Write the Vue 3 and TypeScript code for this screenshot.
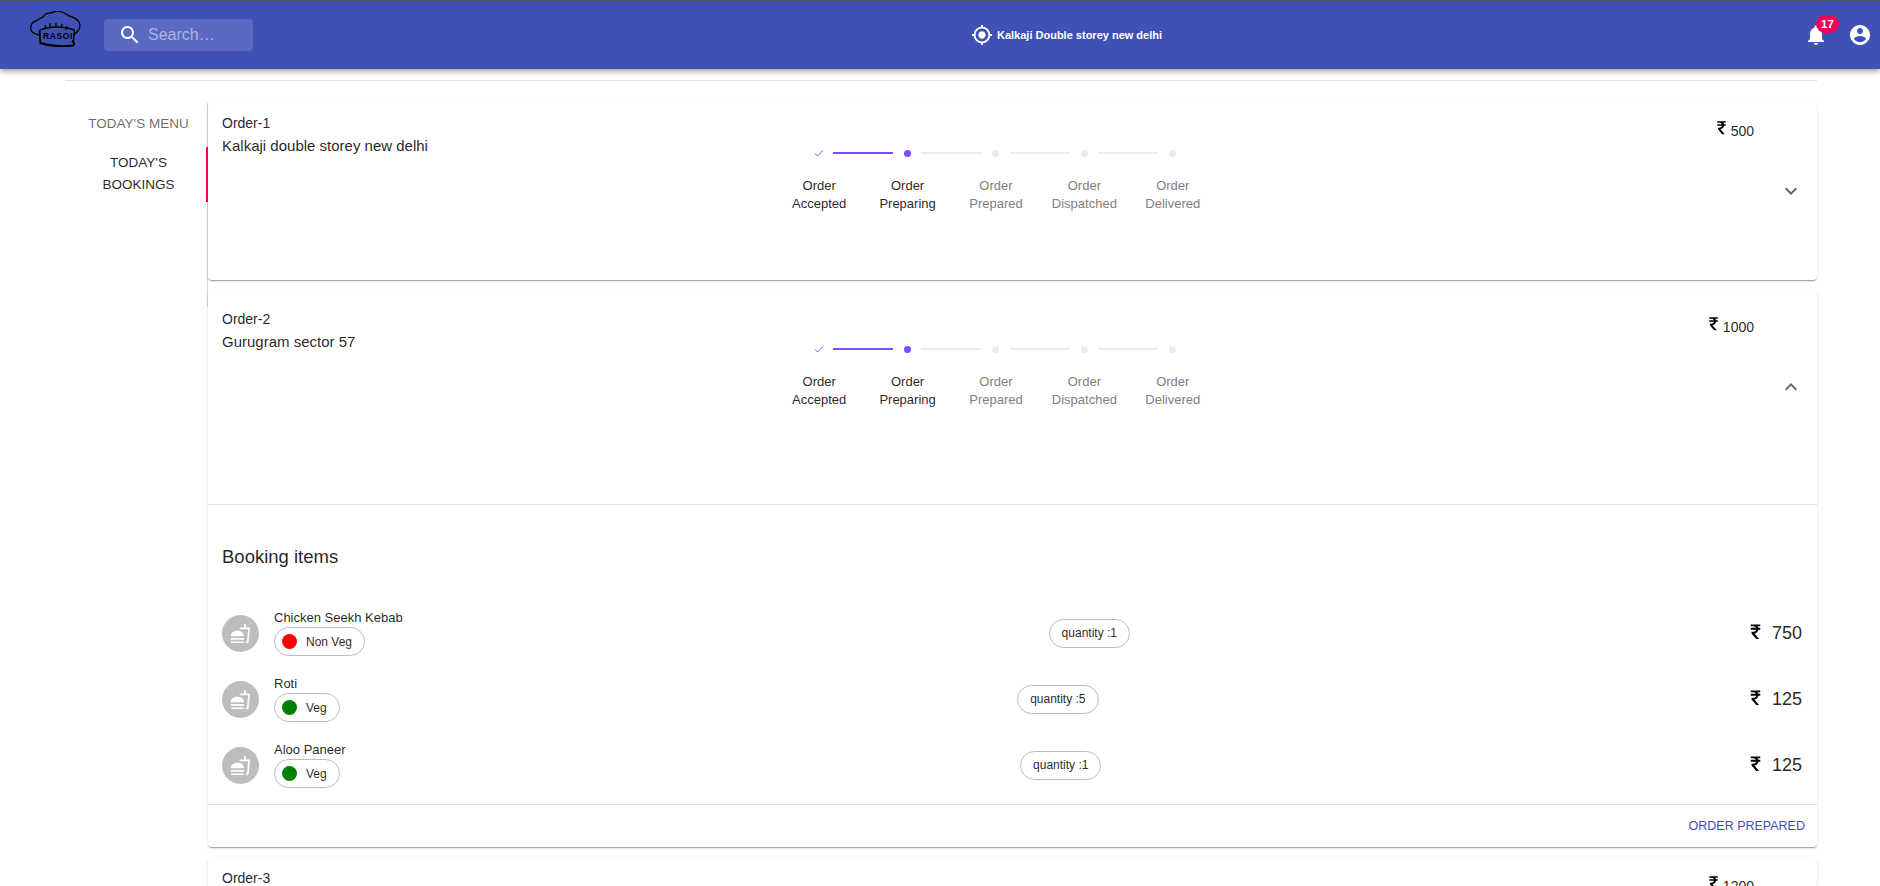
<script setup lang="ts">
interface Step { label: string; state: 'done' | 'active' | 'idle' }
interface Item { name: string; veg: boolean; qty: number; price: number }

const steps: Step[] = [
  { label: 'Accepted', state: 'done' },
  { label: 'Preparing', state: 'active' },
  { label: 'Prepared', state: 'idle' },
  { label: 'Dispatched', state: 'idle' },
  { label: 'Delivered', state: 'idle' },
]
const items: Item[] = [
  { name: 'Chicken Seekh Kebab', veg: false, qty: 1, price: 750 },
  { name: 'Roti', veg: true, qty: 5, price: 125 },
  { name: 'Aloo Paneer', veg: true, qty: 1, price: 125 },
]
const rupee = 'M6 3h12v2.300h-3.600c.6.7 1 1.300 1.200 2.100H18v2.300h-2.400c-.4 2.600-2.400 4.500-5 4.900L16.500 21.500h-3.600l-5.900-7V12.300h2.100c1.900 0 3.200-.9 3.600-2.600H6V7.400h6.500C12 6.200 10.900 5.300 9.400 5.300H6z'
</script>

<template>
  <div class="page">
    <header class="bar">
      <div class="logo">
        <svg width="51" height="36" viewBox="0 0 51 36" fill="none" stroke="#000" stroke-width="1.300">
          <path d="M9 24C4 23 .7 21 .7 17 .7 13 3 10.500 7 9.500 9 8 11 6.500 13 6 15 3 18 1.700 21 2 24 .3 29 0 32 1 35 2 37 3.500 39 5 43 6 47 8 49 11 50.500 14 50 18 47 21 45 23 44 24 43 24.500" />
          <path d="M10 19C20 15 34 15 44.500 19L43.500 30" />
          <path d="M9.500 19L10.500 33" stroke-width="1.800" />
          <path d="M10 32C20 35 33 36 43 34.500 45 33 44 31 42 30" stroke-width="2" />
          <path d="M15 14l.6 4M20 12l.4 5M26 12l0 5M32 13l-.8 4M37 15l-1.200 4" />
          <text x="13" y="28" class="logo-text">RASOI</text>
        </svg>
      </div>
      <div class="search">
        <svg class="search-icon" viewBox="0 0 24 24" width="24" height="24"><path fill="#fff" d="M15.500 14h-.79l-.28-.27C15.410 12.590 16 11.110 16 9.500 16 5.910 13.090 3 9.500 3S3 5.910 3 9.500 5.910 16 9.500 16c1.610 0 3.090-.59 4.230-1.570l.27.28v.79l5 4.990L20.490 19l-4.990-5zm-6 0C7.010 14 5 11.990 5 9.500S7.010 5 9.500 5 14 7.010 14 9.500 11.990 14 9.500 14z"/></svg>
        <span class="search-text">Search…</span>
      </div>
      <div class="location">
        <svg viewBox="0 0 24 24" width="22" height="22"><path fill="#fff" d="M12 8c-2.210 0-4 1.790-4 4s1.790 4 4 4 4-1.790 4-4-1.790-4-4-4zm8.940 3c-.46-4.170-3.770-7.480-7.940-7.940V1h-2v2.060C6.830 3.520 3.520 6.830 3.060 11H1v2h2.060c.46 4.170 3.770 7.480 7.940 7.940V23h2v-2.060c4.170-.46 7.480-3.770 7.940-7.940H23v-2h-2.060zM12 19c-3.870 0-7-3.130-7-7s3.130-7 7-7 7 3.130 7 7-3.130 7-7 7z"/></svg>
        <span>Kalkaji Double storey new delhi</span>
      </div>
      <div class="actions">
        <div class="bell">
          <svg viewBox="0 0 24 24" width="24" height="24"><path fill="#fff" d="M12 22c1.100 0 2-.9 2-2h-4c0 1.100.89 2 2 2zm6-6v-5c0-3.070-1.640-5.640-4.500-6.320V4c0-.83-.67-1.500-1.500-1.500s-1.500.67-1.500 1.500v.68C7.630 5.360 6 7.920 6 11v5l-2 2v1h16v-1l-2-2z"/></svg>
          <span class="badge">17</span>
        </div>
        <svg viewBox="0 0 24 24" width="24" height="24"><path fill="#fff" d="M12 2C6.480 2 2 6.480 2 12s4.480 10 10 10 10-4.480 10-10S17.520 2 12 2zm0 3c1.660 0 3 1.340 3 3s-1.340 3-3 3-3-1.340-3-3 1.340-3 3-3zm0 14.200c-2.500 0-4.710-1.280-6-3.220.03-1.990 4-3.080 6-3.080 1.990 0 5.970 1.090 6 3.080-1.290 1.940-3.500 3.220-6 3.220z"/></svg>
      </div>
    </header>

    <main class="content">
      <hr class="rule" />
      <div class="columns">
        <nav class="tabs">
          <div class="tab">TODAY'S MENU</div>
          <div class="tab tab-selected">TODAY'S<br />BOOKINGS</div>
        </nav>
        <section class="orders">
          <article class="card card-first">
            <div class="summary">
              <div class="who">
                <div class="order-no">Order-1</div>
                <div class="place">Kalkaji double storey new delhi</div>
              </div>
              <div class="stepper">
                <div v-for="(s, i) in steps" :key="s.label" class="step" :class="s.state">
                  <div class="track">
                    <svg v-if="s.state === 'done'" class="check" viewBox="0 0 24 24" width="12" height="12"><path fill="none" stroke="#7c4dff" stroke-width="2" d="M4 13l5 5L20 7"/></svg>
                    <span v-else class="dot"></span>
                    <span v-if="i < steps.length - 1" class="line"></span>
                  </div>
                  <div class="step-label">Order<br />{{ s.label }}</div>
                </div>
              </div>
              <div class="price"><svg viewBox="0 0 24 24" width="17" height="17"><path :d="rupee"/></svg><span>500</span></div>
              <svg class="chevron" viewBox="0 0 24 24" width="24" height="24"><path fill="#666" d="M16.590 8.590L12 13.170 7.410 8.590 6 10l6 6 6-6z"/></svg>
            </div>
          </article>

          <article class="card card-open">
            <div class="summary summary-open">
              <div class="who">
                <div class="order-no">Order-2</div>
                <div class="place">Gurugram sector 57</div>
              </div>
              <div class="stepper">
                <div v-for="(s, i) in steps" :key="s.label" class="step" :class="s.state">
                  <div class="track">
                    <svg v-if="s.state === 'done'" class="check" viewBox="0 0 24 24" width="12" height="12"><path fill="none" stroke="#7c4dff" stroke-width="2" d="M4 13l5 5L20 7"/></svg>
                    <span v-else class="dot"></span>
                    <span v-if="i < steps.length - 1" class="line"></span>
                  </div>
                  <div class="step-label">Order<br />{{ s.label }}</div>
                </div>
              </div>
              <div class="price"><svg viewBox="0 0 24 24" width="17" height="17"><path :d="rupee"/></svg><span>1000</span></div>
              <svg class="chevron" viewBox="0 0 24 24" width="24" height="24"><path fill="#666" d="M12 8l-6 6 1.410 1.410L12 10.830l4.590 4.580L18 14z"/></svg>
            </div>
            <div class="details">
              <h3 class="details-title">Booking items</h3>
              <div v-for="it in items" :key="it.name" class="item">
                <div class="item-main">
                  <div class="avatar">
                    <svg viewBox="0 0 24 24" width="21" height="21"><path fill="#fff" d="M1 21.980c0 .56.450 1.010 1.010 1.010H15c.56 0 1.010-.45 1.010-1.010V21H1v.98zM8.500 8.990C4.750 8.990 1 11 1 15h15c0-4-3.750-6.010-7.500-6.010zM1 17h15v2H1zM18 5V1h-2v4h-5l.23 2h9.560l-1.400 14H18v2h1.720c.84 0 1.530-.65 1.630-1.470L23 5h-5z"/></svg>
                  </div>
                  <div class="item-text">
                    <div class="item-name">{{ it.name }}</div>
                    <div class="chip chip-type">
                      <span class="swatch" :class="it.veg ? 'veg' : 'nonveg'"></span>
                      <span>{{ it.veg ? 'Veg' : 'Non Veg' }}</span>
                    </div>
                  </div>
                </div>
                <div class="chip chip-qty">quantity :{{ it.qty }}</div>
                <div class="item-price"><svg viewBox="0 0 24 24" width="19" height="19"><path :d="rupee"/></svg><span>{{ it.price }}</span></div>
              </div>
            </div>
            <div class="footer"><span class="action">ORDER PREPARED</span></div>
          </article>

          <article class="card">
            <div class="summary">
              <div class="who">
                <div class="order-no">Order-3</div>
              </div>
              <div class="price"><svg viewBox="0 0 24 24" width="17" height="17"><path :d="rupee"/></svg><span>1200</span></div>
            </div>
          </article>
        </section>
      </div>
    </main>
  </div>
</template>

<style>
html, body { margin: 0; height: 100%; overflow: hidden; background: #fff; }
</style>

<style scoped>
.page {
  height: 886px;
  overflow: hidden;
  font-family: "Liberation Sans", Arial, sans-serif;
  color: rgba(0, 0, 0, 0.87);
  position: relative;
}
.bar {
  position: relative;
  z-index: 2;
  height: 68px;
  border-top: 1px solid #555;
  background: #3f51b5;
  display: flex;
  align-items: center;
  padding: 0 8px 0 30px;
  box-shadow: 0 2px 4px -1px rgba(0,0,0,.2), 0 4px 5px rgba(0,0,0,.14), 0 1px 10px rgba(0,0,0,.12);
}
.logo { width: 74px; height: 36px; margin-top: -12px; }
.logo-text { font: 700 8.500px "Liberation Sans", sans-serif; fill: #000; stroke: none; letter-spacing: .6px; }
.search {
  width: 135px;
  height: 32px;
  margin-top: -1px;
  border-radius: 4px;
  background: rgba(255,255,255,.15);
  display: flex;
  align-items: center;
  padding-left: 14px;
}
.search-icon { flex: none; }
.search-text { margin-left: 6px; font-size: 16px; color: rgba(255,255,255,.5); }
.location {
  margin-left: 718px;
  display: flex;
  align-items: center;
  gap: 4px;
  color: #fff;
  font-size: 11px;
  font-weight: 700;
}
.actions { margin-left: auto; display: flex; align-items: center; gap: 20px; }
.bell { position: relative; width: 24px; height: 24px; }
.badge {
  position: absolute;
  top: -8px;
  left: 12px;
  min-width: 23px;
  height: 18px;
  border-radius: 9px;
  background: #f50057;
  color: #fff;
  font-size: 11.500px;
  font-weight: 700;
  display: flex;
  align-items: center;
  justify-content: center;
}
.content { padding: 11px 63px 0 65px; }
.rule { margin: 0; border: 0; height: 1px; background: #e0e0e0; }
.columns { display: flex; margin-top: 22px; align-items: flex-start; }
.tabs {
  width: 143px;
  height: 204px;
  box-sizing: border-box;
  flex: none;
  border-right: 1px solid #d8d8d8;
}
.tab {
  font-size: 13.500px;
  line-height: 22px;
  text-align: center;
  color: rgba(0,0,0,.6);
  height: 44px;
  padding: 0 0 2px 5px;
  display: flex;
  align-items: center;
  justify-content: center;
  box-sizing: border-box;
  white-space: nowrap;
}
.tab-selected {
  position: relative;
  color: rgba(0,0,0,.87);
  height: 55px;
  padding-bottom: 2px;
}
.tab-selected::after {
  content: '';
  position: absolute;
  right: -1px;
  top: 0;
  bottom: 0;
  width: 2px;
  background: #f50057;
}
.orders { flex: 1; min-width: 0; }
.card {
  background: #fff;
  border-radius: 4px;
  box-shadow: 0 2px 1px -1px rgba(0,0,0,.2), 0 1px 1px rgba(0,0,0,.14), 0 1px 3px rgba(0,0,0,.12);
  margin-bottom: 11px;
}
.card-first { height: 177px; }
.summary {
  position: relative;
  display: flex;
  padding: 10px 14px 0;
  height: 100%;
  box-sizing: border-box;
}
.summary-open { height: 214px; padding-top: 18px; border-bottom: 1px solid #e0e0e0; }
.who { width: 553px; flex: none; }
.order-no { font-size: 14px; line-height: 20px; }
.place { font-size: 15px; line-height: 20px; margin-top: 3px; }
.stepper { display: flex; width: 442px; margin-top: 35px; }
.step { width: 88.400px; text-align: center; flex: none; }
.track { position: relative; height: 10px; display: flex; align-items: center; justify-content: center; }
.dot { width: 7px; height: 7px; border-radius: 50%; background: #eaeaf0; }
.active .dot { background: #7c4dff; }
.line { position: absolute; left: 58px; width: 60px; height: 2px; background: #eaeaf0; }
.done .line { background: #7c4dff; }
.step-label { margin-top: 19px; font-size: 13px; line-height: 18px; color: #808080; }
.done .step-label, .active .step-label { color: rgba(0,0,0,.87); }
.price {
  position: absolute;
  right: 63px;
  top: 16px;
  display: flex;
  align-items: flex-end;
  gap: 1px;
  font-size: 14px;
  line-height: 16px;
}
.summary-open .price { top: 24px; }
.price svg { margin-bottom: 3px; }
.chevron { position: absolute; right: 14px; top: 76px; }
.summary-open .chevron { top: 84px; }
.details { padding: 40px 14px 0; }
.details-title { margin: 0 0 31px; font-size: 18.500px; font-weight: 400; line-height: 24px; }
.item { height: 66px; display: flex; align-items: center; justify-content: space-between; }
.item-main { display: flex; align-items: center; padding-right: 30px; }
.avatar {
  width: 37px;
  height: 37px;
  border-radius: 50%;
  background: #bdbdbd;
  display: flex;
  align-items: center;
  justify-content: center;
  margin-right: 15px;
}
.item-name { font-size: 13px; line-height: 15px; margin-bottom: 2px; }
.chip {
  border: 1px solid #bdbdbd;
  border-radius: 15px;
  height: 29px;
  box-sizing: border-box;
  display: inline-flex;
  align-items: center;
  font-size: 12px;
}
.chip-type { padding: 0 12px 0 7px; }
.swatch { width: 15px; height: 15px; border-radius: 50%; margin-right: 9px; }
.veg { background: #008000; }
.nonveg { background: #f00; }
.chip-qty { padding: 0 12px; }
.item-price { display: flex; align-items: center; gap: 7px; font-size: 18px; padding-right: 1px; }
.item-price svg { margin-top: -3px; }
.footer {
  border-top: 1px solid #e0e0e0;
  height: 42px;
  margin-top: 6px;
  display: flex;
  align-items: center;
  justify-content: flex-end;
  padding-right: 12px;
}
.action { font-size: 12.500px; color: #3f51b5; }
</style>
